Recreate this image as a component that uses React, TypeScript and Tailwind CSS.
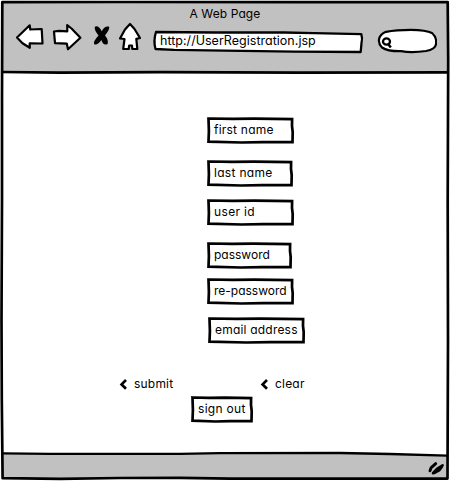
import type { ReactNode } from "react";

type FieldProps = { label: string; width: number; box: string; text: string };

/* Rectangle with a slightly uneven, pen-like outline. */
function SketchBox({ label, width: w, box, text }: FieldProps) {
  return (
    <div className={`relative h-[26px] shrink-0 ${box}`}>
      <svg className="absolute inset-0 overflow-visible" width={w} height={26} aria-hidden="true">
        <path
          d={`M1.5 1.5 L${w * 0.3} 1.9 L${w * 0.55} 1.7 L${w - 0.9} 2.1 L${w - 1} 9 L${w - 0.3} 15 L${w - 0.5} 25.2 L${w * 0.65} 25.2 L${w * 0.4} 25.5 L1.5 24.6 L1.9 14 Z`}
          fill="#fff"
          stroke="#000"
          strokeWidth="2.7"
          strokeLinejoin="miter"
        />
      </svg>
      <span className={`relative block whitespace-nowrap pl-[7px] leading-[25px] ${text}`}>{label}</span>
    </div>
  );
}

function LinkItem({ children, className }: { children: ReactNode; className: string }) {
  return (
    <div className={`flex h-[18px] items-center ${className}`}>
      <svg width="9" height="12" viewBox="0 0 9 12" className="shrink-0" aria-hidden="true">
        <path d="M7 2 L2.6 6.4 L7 10.8" fill="none" stroke="#000" strokeWidth="2.7" />
      </svg>
      <span className="pl-[6px] leading-[18px] tracking-[0.2px] whitespace-nowrap">{children}</span>
    </div>
  );
}

function NavIcons() {
  return (
    <svg width="130" height="32" viewBox="14 21 130 32" className="shrink-0" aria-hidden="true">
      <g fill="#fff" stroke="#000" strokeWidth="2.2" strokeLinejoin="round">
        <path d="M17 37.5 L29.7 25.3 L30.3 29.5 L41.7 29 L42.5 43.5 L29.7 43.3 L29.8 47.8 L22.5 43.2 Z" />
        <path d="M54 31.5 L59 30.8 L67.3 31.3 L67.2 25.2 L71.5 28.5 L80.4 37.7 L68 49.3 L66.8 43.7 L55 43.2 Z" />
        <path d="M130 24 L134.5 29 L140 38 L136.3 38.8 L137.3 49 L132.3 49 L132 45.5 L129.2 45.5 L128.7 49 L123.2 49 L124.5 39 L120 38.5 L125 29.5 Z" />
      </g>
      <path d="M94.8 26.8 Q98.3 24.8 101.8 31.2 Q104.2 25.6 109 26.5 Q110.5 28.5 105 35.5 Q108.8 40 107.6 44 Q103.5 46.3 101.3 40 Q97.7 45.5 94.2 44.2 Q92.8 41.5 98.5 35.4 Q94 30 94.8 26.8 Z" />
    </svg>
  );
}

export default function App() {
  return (
    <div className="relative flex h-[481px] w-[450px] flex-col overflow-hidden bg-white font-['Inter',sans-serif] text-[12px] text-black [font-feature-settings:'cv11']">
      <header className="mx-[2px] mt-[2px] h-[71px] shrink-0 bg-[#c1c1c1]">
        <h1 className="pl-[187.5px] pt-[3px] text-[12px] leading-[17px] font-normal tracking-[0.1px]">A Web Page</h1>
        <div className="-mt-px flex items-start pl-[12px]">
          <NavIcons />
          <div className="relative mt-[9px] ml-[10px] h-[22px] w-[208px] shrink-0">
            <svg className="absolute inset-0 overflow-visible" width="208" height="22" aria-hidden="true">
              <path
                d="M2 2 L60 2.5 L130 2.5 L160 3.1 L207.3 4.2 Q208.7 8.5 207.5 13 L206.7 22 L140 21.6 L70 20.6 L20 19.9 L1.5 19 Q-0.8 10.5 2 2 Z"
                fill="#fff"
                stroke="#000"
                strokeWidth="2.3"
                strokeLinejoin="round"
              />
            </svg>
            <span className="relative block pl-[6px] text-[12.5px] leading-[21px] tracking-[0.02px] whitespace-nowrap">
              http://UserRegistration.jsp
            </span>
          </div>
          <svg width="60" height="26" viewBox="377 28 60 26" className="mt-[7px] ml-[15px] shrink-0" aria-hidden="true">
            <path
              d="M386 31.8 Q396 29.8 411 29.8 Q426 30 432 33 Q437 37.5 436 44 Q435.5 49.3 426 51 Q412 53 401 51.2 Q388 51.5 382 47.5 Q377.5 43 379.5 37.5 Q381 34 386 31.8 Z"
              fill="#fff"
              stroke="#000"
              strokeWidth="2.2"
            />
            <ellipse cx="386.5" cy="41.5" rx="3.5" ry="3.2" fill="#fff" stroke="#000" strokeWidth="2.3" />
            <path d="M388 43.7 L390.8 47.4" stroke="#000" strokeWidth="2.5" />
          </svg>
        </div>
      </header>

      <main className="flex h-[381px] shrink-0 flex-col pt-[44px]">
        <form className="ml-[207px] flex flex-col items-start">
          <SketchBox label="first name" width={86} box="w-[86px]" text="tracking-[0.22px]" />
          <SketchBox label="last name" width={85} box="mt-[17px] w-[85px]" text="tracking-[0.3px]" />
          <SketchBox label="user id" width={86} box="mt-[13px] w-[86px]" text="tracking-[0.35px]" />
          <SketchBox label="password" width={84} box="mt-[17px] w-[84px]" text="" />
          <SketchBox label="re-password" width={86} box="mt-[10px] w-[86px]" text="" />
          <SketchBox label="email address" width={96} box="ml-px mt-[13px] w-[96px]" text="tracking-[0.2px]" />
        </form>
        <div className="mt-[32px] flex pl-[119px]">
          <LinkItem className="w-[141px]">submit</LinkItem>
          <LinkItem className="w-[60px]">clear</LinkItem>
        </div>
        <div className="mt-[3px] ml-[191px] flex">
          <SketchBox label="sign out" width={61} box="w-[61px]" text="tracking-[0.3px]" />
        </div>
      </main>

      <footer className="mx-[2px] h-[25px] shrink-0">
        <svg width="446" height="25" viewBox="2 454 446 25" className="overflow-visible" aria-hidden="true">
          <path d="M2 453.5 L180 453.8 L250 453 L340 453 L448 455.7 L448 479 L2 478.5 Z" fill="#c1c1c1" />
          <path d="M3 453.3 L50 453.8 L180 453.8 L220 453.2 L340 453 L390 454 L447 455.7" fill="none" stroke="#000" strokeWidth="2.3" />
          <g fill="none" stroke="#000" strokeWidth="2.9" strokeLinecap="round" strokeLinejoin="round">
            <path d="M430 470.8 L431.2 467.6 L435.7 463.6" />
            <path d="M433 473.2 L437 468.8 L442.6 465.3 M434.5 472.8 L439.5 470 L442 466.5" strokeWidth="2.6" />
          </g>
        </svg>
      </footer>

      <svg className="pointer-events-none absolute inset-0" width="450" height="481" aria-hidden="true">
        <g fill="none" stroke="#000" strokeWidth="2.7" strokeLinejoin="round">
          <path d="M2.3 2.2 L120 2 L300 2.2 L447.7 2 L448.2 60 L447.7 200 L448 340 L447.5 478.6 L340 478.7 L230 478.7 L180 477.8 L120 478 L60 478.9 L2.6 478.2 L1.8 400 L1.5 320 L2 200 L2 100 Z" />
          <path d="M2 72 L60 72.6 L160 72.2 L300 72.6 L448 72.4" />
        </g>
      </svg>
    </div>
  );
}
